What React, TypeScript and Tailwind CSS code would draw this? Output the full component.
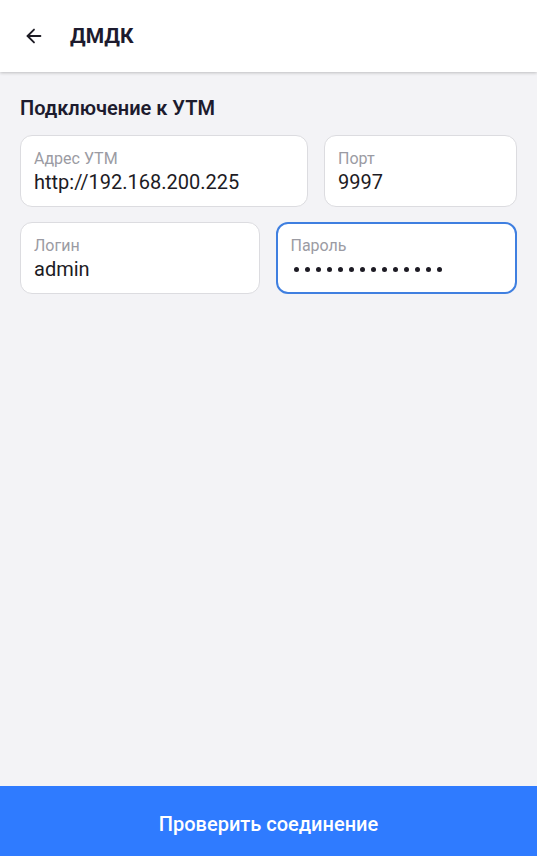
import { ArrowLeft } from 'lucide-react';

type FieldProps = {
  label: string;
  value: string;
  focused?: boolean;
  password?: boolean;
  className?: string;
};

function Field({ label, value, focused, password, className }: FieldProps) {
  return (
    <div
      className={`h-[72px] rounded-[12px] bg-white pr-3 ${
        focused ? 'border-2 border-[#3f7fe0] pl-[13px] pt-[11px]' : 'border border-[#dcdce0] pl-[13px] pt-[12px]'
      } ${className ?? ''}`}
    >
      <div className="text-[16px] leading-[22px] text-[#9b9ba3]">{label}</div>
      {password ? (
        <div className="flex h-[24px] items-center gap-[6px] pl-[3px]">
          {Array.from({ length: 14 }).map((_, i) => (
            <span key={i} className="h-[5px] w-[5px] rounded-full bg-[#1d1b24]" />
          ))}
        </div>
      ) : (
        <div className="text-[20px] leading-[24px] text-[#1d1b24]">{value}</div>
      )}
    </div>
  );
}

export default function App() {
  return (
    <div className="flex h-screen flex-col bg-[#f3f3f6] font-['Roboto',sans-serif]">
      <header className="relative z-10 flex h-[72px] shrink-0 items-center bg-white pl-[23px] shadow-[0_1px_3px_rgba(0,0,0,0.22)]">
        <ArrowLeft className="h-[22px] w-[22px] text-[#1d1b24]" strokeWidth={2} />
        <h1 className="ml-[25px] pt-[1px] text-[21px] font-bold text-[#1d1b2e]">ДМДК</h1>
      </header>

      <main className="flex-1 px-[20px] pt-[23px]">
        <h2 className="text-[20px] font-semibold leading-[26px] text-[#1d1b2e]">Подключение к УТМ</h2>
        <div className="mt-[14px] flex gap-[16px]">
          <Field label="Адрес УТМ" value="http://192.168.200.225" className="w-[288px] shrink-0" />
          <Field label="Порт" value="9997" className="min-w-0 flex-1" />
        </div>
        <div className="mt-[15px] flex gap-[16px]">
          <Field label="Логин" value="admin" className="min-w-0 flex-1" />
          <Field label="Пароль" value="" password focused className="min-w-0 flex-1" />
        </div>
      </main>

      <button className="h-[70px] shrink-0 bg-[#2f7bff] pt-[6px] text-[20px] font-medium text-white">
        Проверить соединение
      </button>
    </div>
  );
}
